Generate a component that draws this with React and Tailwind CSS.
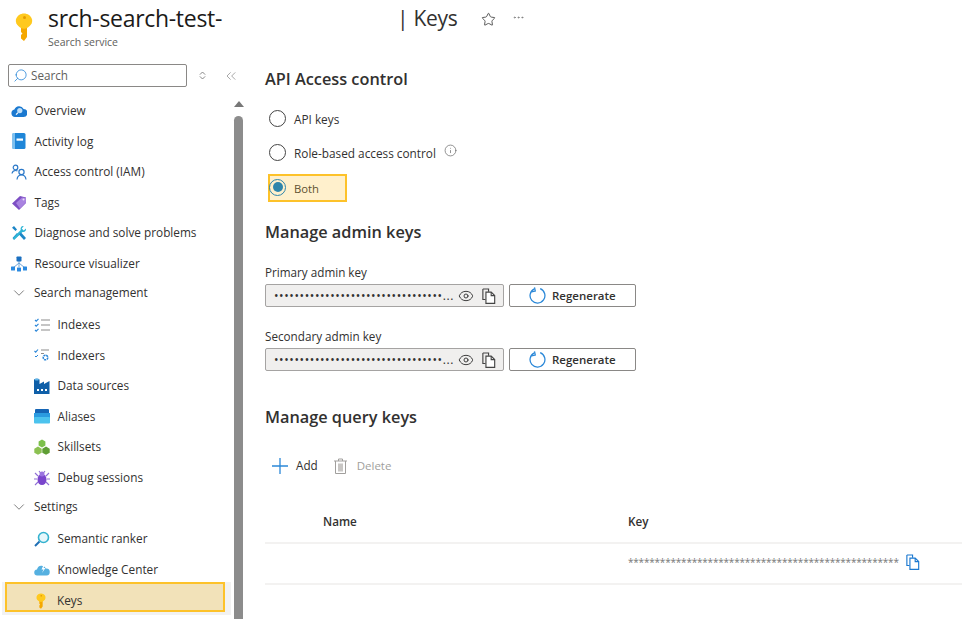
import { Star, Ellipsis, Eye, ChevronDown, Search, ChevronsLeft, Info } from 'lucide-react'

function KeyIcon({ className }) {
  return (
    <svg viewBox="0 0 18 28" className={className}>
      <path d="M6 13h6v11l-3 4-3-2.500V22l1.500-1.500L6 19z" fill="#f5a800" />
      <path d="M1 6.500C2 2.500 5.500.5 9 .5s7 2 8 6c.8 3.500-1.500 6.500-5 8.500-2 1-4 1-6 0-3.500-2-5.800-5-5-8.500z" fill="#ffc91e" />
      <circle cx="9.500" cy="4.500" r="1.500" fill="#e39b00" />
    </svg>
  )
}

function CopyIcon({ stroke = '#444', className }) {
  return (
    <svg viewBox="0 0 16 18" fill="none" stroke={stroke} strokeWidth="1.300" className={className}>
      <path d="M1 1h6.500v3M1 1v12h3" />
      <path d="M4.500 4.500h6l4 4v9h-10z" fill="white" />
      <path d="M10.500 4.500v4h4" />
    </svg>
  )
}

function Overview() {
  return (
    <svg viewBox="0 0 16 16" className="w-4 h-4">
      <path d="M4 14a3.800 3.800 0 0 1-.6-7.500A5 5 0 0 1 12.600 6a4 4 0 0 1-.4 8z" fill="#1b79d0" />
      <circle cx="8.800" cy="7.600" r="2.600" fill="#bfe0fa" />
      <path d="M7 9.600l-2 2" stroke="#fff" strokeWidth="1.300" />
    </svg>
  )
}
function ActivityLog() {
  return (
    <svg viewBox="0 0 14 16" className="w-[14px] h-4">
      <rect x="0.500" width="13" height="16" rx="1.500" fill="#1f86d8" />
      <rect x="0.500" width="2.500" height="16" fill="#7cc0f0" />
      <rect x="4.500" y="5.500" width="6.500" height="2.200" fill="#fff" />
    </svg>
  )
}
function Iam() {
  return (
    <svg viewBox="0 0 16 16" fill="none" stroke="#2a78c8" strokeWidth="1.200" className="w-4 h-4">
      <circle cx="4.500" cy="3.500" r="2.300" />
      <path d="M1 9.500c.4-2 1.600-3 3.500-3 .9 0 1.400.2 2 .6" />
      <circle cx="10.500" cy="8" r="2.600" />
      <path d="M6 15.500c.3-2.800 2-4.500 4.500-4.500s4.200 1.700 4.500 4.500" />
    </svg>
  )
}
function Tags() {
  return (
    <svg viewBox="0 0 16 16" className="w-4 h-4">
      <path d="M1 8.500L9 1l6 1.500L15 8l-7 7z" fill="#7d4fc4" />
      <path d="M5 8l6-5.500 4 .5v4.500l-6 6z" fill="#a983e0" />
      <circle cx="12.500" cy="4.500" r="1" fill="#e8dcf8" />
    </svg>
  )
}
function Wrench() {
  return (
    <svg viewBox="0 0 16 16" className="w-4 h-4">
      <path d="M3 1l3 3.500L4.500 6 1 2.800zM6 8l-4.500 5 1.500 1.800L8 10z" fill="#1c86c7" />
      <path d="M15 3.500l-2.300 2-2-2 2-2.300C10.700.6 9 2.500 9.700 5L2 13l1 2 8.500-8c2 .5 4-1 3.500-3.500z" fill="#2fb5d6" />
      <path d="M8 9.500l2-2 5 5.500-2 2z" fill="#1c86c7" />
    </svg>
  )
}
function Visualizer() {
  return (
    <svg viewBox="0 0 16 16" className="w-4 h-4">
      <path d="M8 4v7M8 7l-6 5M8 7l6 5" stroke="#6ea5d8" strokeWidth="1" fill="none" />
      <rect x="5.500" y="0.500" width="5" height="5" rx="0.700" fill="#1a6fc0" />
      <rect x="0" y="10.500" width="4" height="4" rx="0.500" fill="#2b8ae0" />
      <rect x="6" y="11.500" width="4" height="4" rx="0.500" fill="#2b8ae0" />
      <rect x="12" y="10.500" width="4" height="4" rx="0.500" fill="#2b8ae0" />
    </svg>
  )
}
function Indexes() {
  return (
    <svg viewBox="0 0 16 14" fill="none" className="w-4 h-[14px]">
      <path d="M1 2l1.200 1.200L4.500.8M1 7l1.200 1.200L4.500 5.800M1 12l1.200 1.200L4.500 10.800" stroke="#2a86d8" strokeWidth="1.100" />
      <path d="M7 2h9M7 7h9M7 12h9" stroke="#8c8c8c" strokeWidth="1.100" />
    </svg>
  )
}
function Indexers() {
  return (
    <svg viewBox="0 0 16 14" fill="none" className="w-4 h-[14px]">
      <path d="M0.500 3l1.200 1.200L4 1.500" stroke="#2a86d8" strokeWidth="1.100" />
      <path d="M7 2h8M7 5.500h3" stroke="#8c8c8c" strokeWidth="1.100" />
      <circle cx="11.500" cy="9.500" r="2.300" stroke="#2a86d8" strokeWidth="1.500" strokeDasharray="2 0.600" />
      <path d="M1 8l1 1 2-2" stroke="#2a86d8" strokeWidth="1" />
    </svg>
  )
}
function DataSources() {
  return (
    <svg viewBox="0 0 16 16" className="w-4 h-4">
      <path d="M0 1.500a3 1.200 0 0 1 5.500 0V6L10 3.500V6l5.500-3V16H0z" fill="#0f5fa8" />
      <rect x="0.800" y="0.500" width="4" height="2" rx="1" fill="#5fb4e8" />
      <rect x="3" y="11" width="2" height="2" fill="#fff" />
      <rect x="7" y="11" width="2" height="2" fill="#fff" />
      <rect x="11" y="11" width="2" height="2" fill="#fff" />
    </svg>
  )
}
function Aliases() {
  return (
    <svg viewBox="0 0 16 15" className="w-4 h-[15px]">
      <rect x="1" width="14" height="6" rx="1" fill="#1565b5" />
      <rect y="4" width="16" height="5" fill="#2b9be0" />
      <rect y="8" width="16" height="6.500" rx="1" fill="#4cc3ee" />
    </svg>
  )
}
function Skillsets() {
  return (
    <svg viewBox="0 0 16 16" className="w-4 h-4">
      <path d="M8 .500l3.400 2v4L8 8.500l-3.400-2v-4z" fill="#7cc04b" />
      <path d="M4 7.500l3.700 2.200v4L4 15.800.300 13.700v-4z" fill="#8cc152" />
      <path d="M12 7.500l3.700 2.200v4L12 15.800l-3.700-2.100v-4z" fill="#5f9e35" />
    </svg>
  )
}
function Bug() {
  return (
    <svg viewBox="0 0 16 16" className="w-4 h-4">
      <path d="M1 3l3 3M15 3l-3 3M0 9h3M13 9h3M1 15l3-3M15 15l-3-3M5 1l1.500 2M11 1L9.500 3" stroke="#8f6ed5" strokeWidth="1.100" />
      <ellipse cx="8" cy="9.500" rx="4.500" ry="5.500" fill="#7a45cc" />
      <circle cx="8" cy="4" r="2.500" fill="#9a72e0" />
    </svg>
  )
}
function Semantic() {
  return (
    <svg viewBox="0 0 16 16" fill="none" className="w-4 h-4">
      <circle cx="9.500" cy="6.500" r="5" stroke="#35b2cf" strokeWidth="1.600" fill="#e6f7fb" />
      <path d="M5.500 10.500L1 15" stroke="#1f6fb5" strokeWidth="2" />
    </svg>
  )
}
function Knowledge() {
  return (
    <svg viewBox="0 0 16 12" className="w-4 h-3">
      <path d="M3.500 11.500a3 3 0 0 1-.5-6A4.800 4.800 0 0 1 12 4.500a3.500 3.500 0 0 1 .5 7z" fill="#55b0e0" />
      <path d="M9.500 1L7.500 5.500h2L8 9l3.500-5H9.500L11 1z" fill="#fff" />
    </svg>
  )
}

function NavRow({ icon, label, indent, active }) {
  if (active) {
    return (
      <div className="w-[229px] ml-[2px] -mt-[3px] bg-[#f2f2f2] pl-[3px] pr-[6px] pb-[3px]">
        <div className="h-[30px] flex items-center border-2 border-[#fdc22a] bg-[#f2e2b9] pl-[29px] pt-[7px] gap-[11px]">
          <KeyIcon className="w-[10px] h-[16px]" />
          <span className="text-[11.8px] text-[#323130]">{label}</span>
        </div>
      </div>
    )
  }
  return (
    <div className={`h-[30.6px] flex items-center ${indent ? 'pl-[34px]' : 'pl-[11px]'}`}>
      <span className="w-4 flex justify-center shrink-0">{icon}</span>
      <span className="ml-[7.5px] text-[11.8px] text-[#323130]">{label}</span>
    </div>
  )
}

function Group({ label, className }) {
  return (
    <div className={`flex items-center pl-[10px] ${className}`}>
      <ChevronDown className="w-[18px] h-[18px] text-[#555]" strokeWidth={1} />
      <span className="ml-[6px] text-[11.8px] text-[#323130]">{label}</span>
    </div>
  )
}

function Radio({ label, info }) {
  return (
    <div className="flex items-center h-[34px]">
      <span className="w-[17px] h-[17px] ml-[4px] rounded-full border-[1.5px] border-[#444] bg-white" />
      <span className="ml-[8px] text-[11.8px] text-[#323130] mt-[4px]">{label}</span>
      {info && <Info className="ml-[8px] mb-[4px] w-[13px] h-[13px] text-[#666]" strokeWidth={1.3} />}
    </div>
  )
}

function KeyField({ label, className }) {
  return (
    <div className={className}>
      <div className="text-[11.7px] leading-[16px] text-[#323130]">{label}</div>
      <div className="flex gap-[5px] mt-[4px]">
        <div className="w-[239px] h-[23px] bg-[#f0efee] border border-[#a5a3a2] rounded-[2px] flex items-center pl-[8px]">
          <span className="w-[182px] text-[12px] text-[#323130] tracking-[0.6px] whitespace-nowrap leading-none">{'•'.repeat(33)}...</span>
          <Eye className="ml-[2px] w-[16px] h-[16px] text-[#333]" strokeWidth={1.4} />
          <CopyIcon className="ml-[8px] w-[14px] h-[16px]" />
        </div>
        <div className="w-[127px] h-[23px] bg-white border border-[#8a8886] rounded-[2px] flex items-center pl-[19px]">
          <svg viewBox="0 0 16 16" fill="none" stroke="#2b88d8" strokeWidth="1.200" className="w-[17px] h-[17px]">
            <path d="M5 1.800a7 7 0 1 0 5.500-.2" />
            <path d="M5.500 .5v3.500h-3.500" transform="rotate(-12 5 2)" />
          </svg>
          <span className="ml-[6px] mt-[1px] text-[11.5px] font-semibold text-[#323130]">Regenerate</span>
        </div>
      </div>
    </div>
  )
}

export default function App() {
  return (
    <div className="w-[970px] h-[619px] overflow-hidden bg-white font-['Open_Sans','Noto_Sans',sans-serif]">
      {/* Header */}
      <div className="h-[64px] flex">
        <div className="w-[48px] pl-[15px] pt-[13px] shrink-0">
          <KeyIcon className="w-[18px] h-[28px]" />
        </div>
        <div className="w-[175px] whitespace-nowrap">
          <div className="text-[23px] leading-[32px] mt-[2px] font-medium text-[#1b1a19] tracking-[-0.3px]">srch-search-test-</div>
          <div className="text-[10.5px] leading-[14px] mt-[0.5px] text-[#605e5c]">Search service</div>
        </div>
        <div className="ml-[174px] h-[30px] mt-[4px] flex items-center">
          <span className="text-[21px] text-[#323130] tracking-[-0.3px]">| Keys</span>
          <Star className="ml-[23.5px] w-[15px] h-[15px] text-[#444]" strokeWidth={1.4} />
          <Ellipsis className="ml-[16px] mb-[4px] w-[13px] h-[13px] text-[#777]" strokeWidth={1.4} />
        </div>
      </div>

      <div className="flex">
        {/* Sidebar */}
        <div className="w-[233px] shrink-0">
          <div className="flex items-center pl-[8px] h-[23px]">
            <div className="w-[179px] h-[23px] shrink-0 border border-[#8a8886] rounded-[2px] flex items-center pl-[4px]">
              <Search className="w-[15px] h-[15px] text-[#2b88d8] -scale-x-100" strokeWidth={1.3} />
              <span className="ml-[3px] mt-[1px] text-[11.7px] text-[#605e5c]">Search</span>
            </div>
            <svg viewBox="0 0 8 10" fill="none" stroke="#777" className="ml-[12px] w-[7px] h-[9px] shrink-0">
              <path d="M1 4l3-3 3 3M1 6l3 3 3-3" />
            </svg>
            <ChevronsLeft className="ml-[17px] w-[16px] h-[16px] shrink-0 text-[#888]" strokeWidth={1.1} />
          </div>
          <div className="mt-[8.5px]">
            <NavRow icon={<Overview />} label="Overview" />
            <NavRow icon={<ActivityLog />} label="Activity log" />
            <NavRow icon={<Iam />} label="Access control (IAM)" />
            <NavRow icon={<Tags />} label="Tags" />
            <NavRow icon={<Wrench />} label="Diagnose and solve problems" />
            <NavRow icon={<Visualizer />} label="Resource visualizer" />
            <Group label="Search management" className="h-[28px]" />
            <div className="h-[2.5px]" />
            <NavRow indent icon={<Indexes />} label="Indexes" />
            <NavRow indent icon={<Indexers />} label="Indexers" />
            <NavRow indent icon={<DataSources />} label="Data sources" />
            <NavRow indent icon={<Aliases />} label="Aliases" />
            <NavRow indent icon={<Skillsets />} label="Skillsets" />
            <NavRow indent icon={<Bug />} label="Debug sessions" />
            <Group label="Settings" className="h-[28px]" />
            <div className="h-[2.5px]" />
            <NavRow indent icon={<Semantic />} label="Semantic ranker" />
            <NavRow indent icon={<Knowledge />} label="Knowledge Center" />
            <div className="h-[0.5px]" />
            <NavRow active label="Keys" />
          </div>
        </div>

        {/* Scrollbar */}
        <div className="w-[11px] shrink-0 mt-[37px] flex flex-col items-center">
          <div className="w-0 h-0 border-x-[5px] border-x-transparent border-b-[6px] border-b-[#777]" />
          <div className="w-[9px] h-[520px] mt-[9px] rounded-t-[5px] bg-[#8c8c8c]" />
        </div>

        {/* Main */}
        <div className="flex-1 ml-[21px]">
          <h2 className="text-[16.3px] leading-[24px] font-semibold text-[#323130] mt-[3px]">API Access control</h2>
          <div className="mt-[10px]">
            <Radio label="API keys" />
            <Radio label="Role-based access control" info />
            <div className="w-[79px] h-[28px] border-2 border-[#fdc22a] bg-[#fff0cc] mt-[5px] ml-[3px] flex items-center">
              <span className="mb-[2px] -ml-px w-[17px] h-[17px] rounded-full border-[1.5px] border-[#2e85ab] flex items-center justify-center">
                <span className="w-[10px] h-[10px] rounded-full bg-[#2e85ab]" />
              </span>
              <span className="ml-[8px] mt-[2px] text-[11.3px] text-[#605030]">Both</span>
            </div>
          </div>
          <h2 className="mt-[18px] text-[16.3px] leading-[24px] font-semibold text-[#323130]">Manage admin keys</h2>
          <KeyField label="Primary admin key" className="mt-[20px]" />
          <KeyField label="Secondary admin key" className="mt-[21px]" />
          <h2 className="mt-[34px] text-[16.3px] leading-[24px] font-semibold text-[#323130]">Manage query keys</h2>
          <div className="mt-[25px] h-[24px] flex items-center">
            <svg viewBox="0 0 16 16" stroke="#2b88d8" strokeWidth="1.300" className="ml-[7px] w-4 h-4">
              <path d="M8 0v16M0 8h16" />
            </svg>
            <span className="ml-[8px] text-[11.7px] text-[#323130]">Add</span>
            <svg viewBox="0 0 13 16" fill="none" stroke="#a19f9d" strokeWidth="1" className="ml-[16px] w-[13px] h-4">
              <path d="M0 3h13M4.500 3V1h4v2M1.500 3v12.500h10V3" />
              <rect x="4" y="5.500" width="5" height="8" fill="#c8c6c4" stroke="none" />
            </svg>
            <span className="ml-[10px] text-[11.5px] text-[#a19f9d]">Delete</span>
          </div>
          <div className="mt-[28px] w-[697px]">
            <div className="h-[38px] pb-[4px] flex items-center border-b-2 border-[#f3f2f1]">
              <span className="ml-[58px] w-[305px] text-[11.7px] font-semibold text-[#323130]">Name</span>
              <span className="text-[11.7px] font-semibold text-[#323130]">Key</span>
            </div>
            <div className="h-[41px] pb-[3px] flex items-center border-b-2 border-[#f3f2f1]">
              <span className="ml-[363px] w-[270px] whitespace-nowrap text-[10px] leading-none text-[#777] tracking-[-0.2px]">{'*'.repeat(51)}</span>
              <CopyIcon stroke="#1a78d0" className="ml-[8px] w-[14px] h-[16px]" />
            </div>
          </div>
        </div>
      </div>
    </div>
  )
}
